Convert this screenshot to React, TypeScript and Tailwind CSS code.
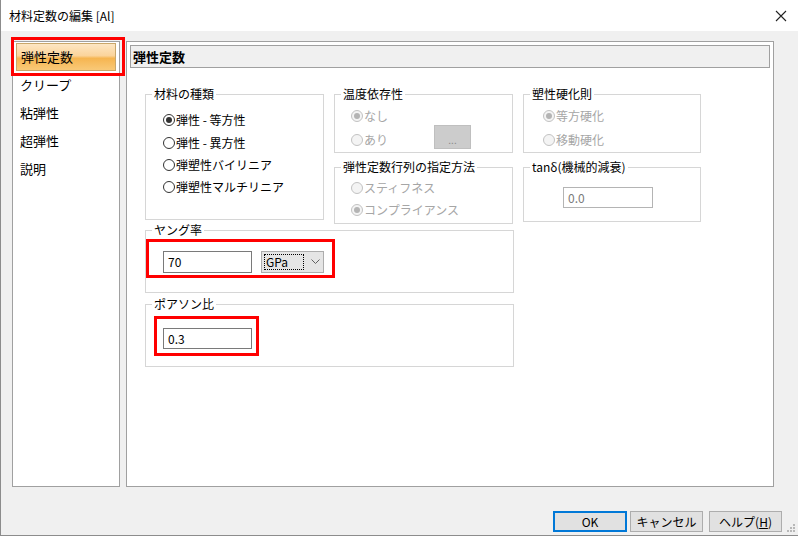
import React from 'react';

type RadioProps = { label: string; checked?: boolean; disabled?: boolean };

function Radio({ label, checked, disabled }: RadioProps) {
  const ring = disabled ? 'border-[#c2c2c2] bg-[#f4f4f4]' : 'border-[#333333] bg-white';
  const dot = disabled ? 'bg-[#b4b4b4]' : 'bg-[#333333]';
  return (
    <div className="flex items-center gap-[1px]">
      <span className={`w-[12px] h-[12px] rounded-full border flex items-center justify-center ${ring}`}>
        {checked && <span className={`w-[6px] h-[6px] rounded-full ${dot}`} />}
      </span>
      <span className={disabled ? 'text-[#a6a6a6]' : 'text-black'}>{label}</span>
    </div>
  );
}

function Group({ title, className, children }: { title: string; className: string; children?: React.ReactNode }) {
  return (
    <div className={`relative border border-[#d6d6d6] ${className}`}>
      <span className="absolute -top-[9px] left-[6px] bg-white px-[2px] leading-[16px] text-black whitespace-nowrap">
        {title}
      </span>
      {children}
    </div>
  );
}

const navItems = ['クリープ', '粘弾性', '超弾性', '説明'];

export default function App() {
  return (
    <div className="w-[798px] h-[536px] flex flex-col bg-[#f0f0f0] border-l border-b border-[#8c8c8c] text-[12px] text-black font-['Noto_Sans_CJK_JP','Noto_Sans',sans-serif] overflow-hidden">
      {/* Title bar */}
      <div className="h-[31px] bg-white flex items-center justify-between pl-[8px] pr-[10px] shrink-0">
        <span className="leading-[16px]">材料定数の編集 [Al]</span>
        <svg width="12" height="12" viewBox="0 0 12 12" className="mr-[1px]">
          <path d="M1 1 L11 11 M11 1 L1 11" stroke="#222" strokeWidth="1.1" />
        </svg>
      </div>

      {/* Body */}
      <div className="relative flex-1 flex flex-col">
        <div className="flex mt-[10px] ml-[11px] h-[446px]">
          {/* Category list */}
          <div className="w-[108px] bg-white border border-[#a0a0a0] pt-[1px] pl-[3px]">
            <div className="w-[100px] h-[28px] flex items-center pl-[4px] text-[13px] border border-[#c9a76b] bg-[linear-gradient(to_bottom,#fde6c4_0%,#fbd49a_45%,#f6b550_55%,#f9c978_100%)]">
              弾性定数
            </div>
            {navItems.map((n) => (
              <div key={n} className="h-[28px] flex items-center pl-[4px] text-[13px]">
                {n}
              </div>
            ))}
          </div>

          {/* Content panel */}
          <div className="ml-[6px] w-[648px] bg-white border border-[#a0a0a0] flex flex-col">
            <div className="mt-[3px] mx-[3px] h-[23px] bg-[#f0f0f0] border border-[#a0a0a0] flex items-center pl-[2px] text-[13px] font-bold">
              弾性定数
            </div>

            <div className="flex mt-[26px] pl-[18px] gap-[10px] items-start">
              <Group title="材料の種類" className="w-[179px] h-[126px] pt-[13px] pl-[17px]">
                <div className="h-[23px] flex items-center"><Radio label="弾性 - 等方性" checked /></div>
                <div className="h-[23px] flex items-center"><Radio label="弾性 - 異方性" /></div>
                <div className="h-[22px] flex items-center"><Radio label="弾塑性バイリニア" /></div>
                <div className="h-[22px] flex items-center"><Radio label="弾塑性マルチリニア" /></div>
              </Group>

              <div className="flex flex-col gap-[14px]">
                <Group title="温度依存性" className="w-[179px] h-[59px] pt-[9px] pl-[16px]">
                  <div className="h-[24px] flex items-center"><Radio label="なし" checked disabled /></div>
                  <div className="h-[24px] flex items-center">
                    <div className="w-[83px]"><Radio label="あり" disabled /></div>
                    <div className="w-[37px] h-[24px] mb-[7px] bg-[#cccccc] border border-[#bfbfbf] flex items-end justify-center pb-[3px] text-[10px] leading-[10px] text-[#8a8a8a]">
                      ...
                    </div>
                  </div>
                </Group>
                <Group title="弾性定数行列の指定方法" className="w-[179px] h-[57px] pt-[9px] pl-[16px]">
                  <div className="h-[22px] flex items-center"><Radio label="スティフネス" disabled /></div>
                  <div className="h-[22px] flex items-center"><Radio label="コンプライアンス" checked disabled /></div>
                </Group>
              </div>

              <div className="flex flex-col gap-[14px]">
                <Group title="塑性硬化則" className="w-[178px] h-[59px] pt-[9px] pl-[19px]">
                  <div className="h-[24px] flex items-center"><Radio label="等方硬化" checked disabled /></div>
                  <div className="h-[24px] flex items-center"><Radio label="移動硬化" disabled /></div>
                </Group>
                <Group title="tanδ(機械的減衰)" className="w-[178px] h-[55px] pt-[19px] pl-[39px]">
                  <div className="w-[90px] h-[21px] border border-[#b4b4b4] bg-white flex items-center pl-[4px] text-[#7a7a7a]">
                    0.0
                  </div>
                </Group>
              </div>
            </div>

            <Group title="ヤング率" className="ml-[18px] mt-[6px] w-[369px] h-[63px] pt-[20px] pl-[17px]">
              <div className="absolute left-0 top-[8px] w-[189px] h-[39px] border-[3px] border-[#ff0000]" />
              <div className="flex gap-[9px]">
                <div className="w-[89px] h-[22px] border border-[#7a7a7a] bg-white flex items-center pl-[4px]">70</div>
                <div className="w-[63px] h-[22px] border border-[#adadad] bg-[#e5e5e5] flex items-center pl-[2px]">
                  <div className="w-[40px] h-[16px] border border-dotted border-black flex items-center pl-[1px] leading-[14px]">
                    GPa
                  </div>
                  <svg width="9" height="6" viewBox="0 0 9 6" className="ml-[7px]">
                    <path d="M0.5 0.5 L4.5 4.5 L8.5 0.5" fill="none" stroke="#606060" strokeWidth="1" />
                  </svg>
                </div>
              </div>
            </Group>

            <Group title="ポアソン比" className="ml-[18px] mt-[11px] w-[369px] h-[63px] pt-[23px] pl-[17px]">
              <div className="absolute left-[8px] top-[11px] w-[105px] h-[40px] border-[3px] border-[#ff0000]" />
              <div className="w-[89px] h-[21px] border border-[#7a7a7a] bg-white flex items-center pl-[4px]">0.3</div>
            </Group>
          </div>
        </div>

        {/* Dialog buttons */}
        <div className="flex justify-end mt-[24px] pr-[16px] h-[21px]">
          <button className="w-[74px] h-[21px] bg-[#e1e1e1] border-2 border-[#0078d7] flex items-center justify-center">OK</button>
          <button className="ml-[3px] w-[73px] h-[21px] bg-[#e1e1e1] border border-[#adadad] flex items-center justify-center">キャンセル</button>
          <button className="ml-[6px] w-[73px] h-[21px] bg-[#e1e1e1] border border-[#adadad] flex items-center justify-center">
            ヘルプ(<span className="underline">H</span>)
          </button>
        </div>

        {/* Selection highlight annotation */}
        <div className="absolute left-[10px] top-[6px] w-[114px] h-[39px] border-[3px] border-[#ff0000] pointer-events-none" />

        {/* Size grip */}
        <svg width="10" height="10" viewBox="0 0 10 10" className="absolute right-[2px] bottom-[2px]">
          <rect x="7" y="1" width="2" height="2" fill="#b8b8b8" />
          <rect x="4" y="4" width="2" height="2" fill="#b8b8b8" />
          <rect x="7" y="4" width="2" height="2" fill="#b8b8b8" />
          <rect x="1" y="7" width="2" height="2" fill="#b8b8b8" />
          <rect x="4" y="7" width="2" height="2" fill="#b8b8b8" />
          <rect x="7" y="7" width="2" height="2" fill="#b8b8b8" />
        </svg>
      </div>
    </div>
  );
}
